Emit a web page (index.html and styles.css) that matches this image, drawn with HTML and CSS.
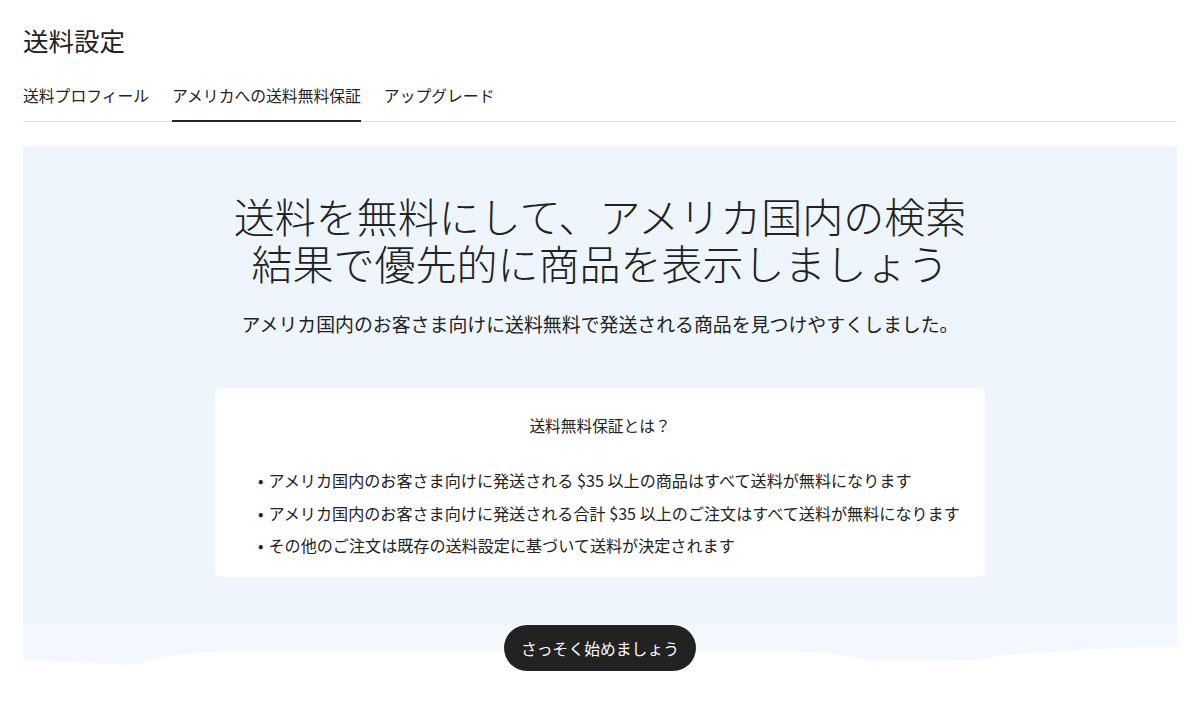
FILE: index.html
```
<!DOCTYPE html>
<html lang="ja">
<head>
<meta charset="utf-8">
<title>送料設定</title>
<link rel="stylesheet" href="styles.css">
</head>
<body>

<div class="page-head">
  <h1 class="page-title">送料設定</h1>
  <nav class="tabs">
    <a class="tab">送料プロフィール</a>
    <a class="tab active">アメリカへの送料無料保証</a>
    <a class="tab">アップグレード</a>
  </nav>
</div>

<section class="hero">
  <div class="hero-main">
    <h2 class="hero-title">送料を無料にして、アメリカ国内の検索結果で優先的に商品を表示しましょう</h2>
    <p class="hero-sub">アメリカ国内のお客さま向けに送料無料で発送される商品を見つけやすくしました。</p>

    <div class="card">
      <h3 class="card-title">送料無料保証とは？</h3>
      <ul class="card-list">
        <li>アメリカ国内のお客さま向けに発送される $35 以上の商品はすべて送料が無料になります</li>
        <li>アメリカ国内のお客さま向けに発送される合計 $35 以上のご注文はすべて送料が無料になります</li>
        <li>その他のご注文は既存の送料設定に基づいて送料が決定されます</li>
      </ul>
    </div>
  </div>

  <div class="hero-foot">
    <svg class="wave" viewBox="0 0 1154 42" preserveAspectRatio="none">
      <path d="M0 0 H1154 V23 C1120 23 1090 24 1060 26 C1030 28 1000 30 972 31 L966 35 C930 37 890 37 860 37 C840 36 830 33 815 30 C790 28 770 27 740 27 L260 27 C220 27 190 27 170 29 C140 32 125 36 115 40 C100 42 60 38 20 37 L0 36 Z" fill="#f2f8fd"/>
    </svg>
    <button class="btn-start">さっそく始めましょう</button>
  </div>
</section>

</body>
</html>
```

FILE: styles.css
```
body {
  margin: 0;
  background: #fff;
  color: #222;
  font-family: "Noto Sans CJK JP", "Noto Sans", sans-serif;
}

.page-head {
  padding: 22px 23px 0;
}

.page-title {
  margin: 0;
  font-size: 25.5px;
  line-height: 36px;
  font-weight: 400;
}

.tabs {
  display: flex;
  gap: 23px;
  margin-top: 26px;
  border-bottom: 1px solid #ddd;
}

.tab {
  font-size: 15.8px;
  line-height: 24px;
  padding-bottom: 12px;
  border-bottom: 2px solid transparent;
  margin-bottom: -1px;
  color: #222;
}

.tab.active {
  border-bottom-color: #222;
}

.hero {
  margin: 24px 23px 0;
}

.hero-main {
  background: #eef5fc;
  padding: 46px 0 47px;
  display: flex;
  flex-direction: column;
  align-items: center;
}

.hero-title {
  margin: 0;
  max-width: 760px;
  text-align: center;
  font-size: 41px;
  line-height: 47px;
  font-weight: 300;
}

.hero-sub {
  margin: 24px 0 0;
  font-size: 18.9px;
  line-height: 28px;
  text-align: center;
}

.card {
  margin-top: 50px;
  width: 770px;
  box-sizing: border-box;
  background: #fff;
  border-radius: 6px;
  padding: 26px 20px 20px 40px;
}

.card-title {
  margin: 0 0 0 -20px;
  font-size: 15.7px;
  line-height: 24px;
  font-weight: 400;
  text-align: center;
}

.card-list {
  list-style: none;
  margin: 30px 0 0;
  padding: 0 0 0 3px;
  font-size: 16.1px;
  line-height: 24px;
}

.card-list li {
  white-space: nowrap;
}

.card-list li + li {
  margin-top: 8.5px;
}

.card-list li::before {
  content: "•";
  margin-right: 5px;
}

.hero-foot {
  position: relative;
  display: flex;
  justify-content: center;
  padding-top: 1px;
}

.wave {
  position: absolute;
  left: 0;
  top: 0;
  width: 100%;
  height: 42px;
}

.btn-start {
  position: relative;
  height: 46px;
  padding: 0 17px;
  border: none;
  border-radius: 23px;
  background: #222;
  color: #fff;
  font-family: inherit;
  font-size: 15.8px;
}
```
